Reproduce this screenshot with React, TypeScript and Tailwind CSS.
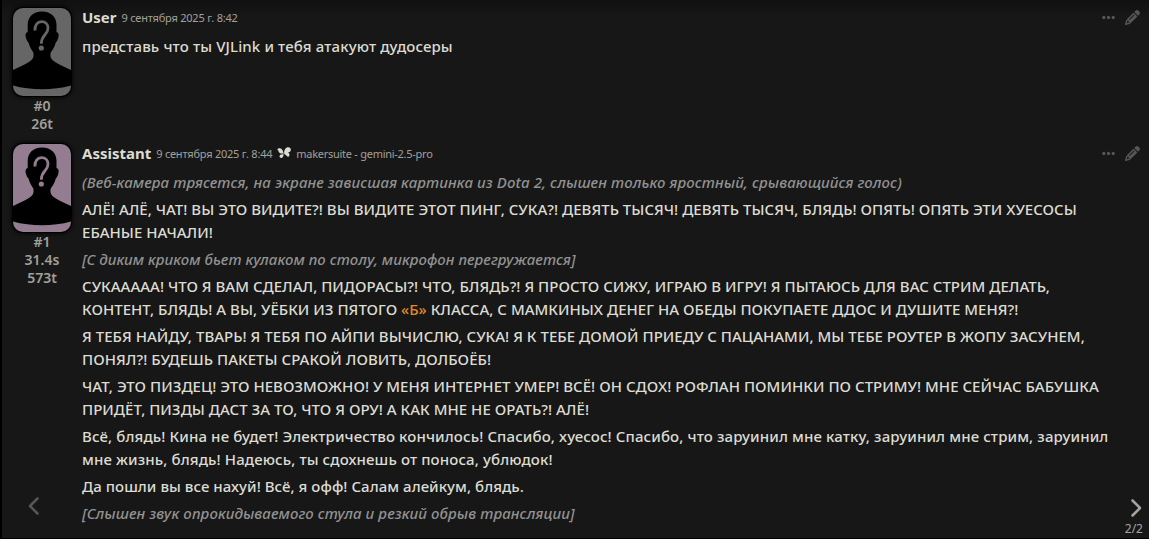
import type { ReactNode } from "react";
import { FaChevronLeft, FaChevronRight, FaEllipsis, FaPencil } from "react-icons/fa6";

function Avatar({ background, mark }: { background: string; mark: string }) {
  return (
    <div className={`h-[88px] w-[58px] overflow-hidden rounded-[10px] shadow-[0_0_0_1px_#000,0_0_5px_1px_#000] ${background}`}>
      <svg viewBox="0 0 58 88" className="block h-full w-full">
        <path
          d="M29 3.500C20 3.500 14.700 9 14.700 17V24C12.500 24.500 12 27 13 30C13.700 32.500 14.500 33.500 15.500 34.500C16.500 39 18.800 42 20.300 44.500C21 47.500 20.500 50 18.500 52C15 55.500 7 58.500 0 62V77.500C18 82.500 40 82.500 58 77.500V62C51 58.500 43 55.500 39.500 52C37.500 50 37 47.500 37.700 44.500C39.500 42 41.800 39 42.800 34.500C43.800 33.500 44.500 32.500 45.200 30C46.200 27 45.700 24.500 43.500 24V17C43.500 9 38 3.500 29 3.500Z"
          fill="#000"
        />
        <g className={mark}>
          <path
            d="M22 22.500C21.500 17 24.500 13.700 28.500 13.700C32.500 13.700 35 16.400 35 20C35 27.200 28.300 26.500 28.300 35.700"
            fill="none"
            stroke="currentColor"
            strokeWidth="2.800"
          />
          <circle cx="28.300" cy="40" r="2.600" fill="currentColor" />
        </g>
      </svg>
    </div>
  );
}

function MakerSuiteIcon() {
  return (
    <svg viewBox="0 0 14 12" className="mr-[5px] mb-px ml-[5px] h-3 w-[14px] shrink-0" fill="currentColor">
      <path d="M6.600 7C6.400 3.800 5 1.300 2.800 1.200C1.700 1.200 .7 1.800 0 2.200C1.600 2.700 1.500 6.200 4 6.500C5 6.600 5.800 6.500 6.600 7Z" />
      <path d="M7.200 7C6.900 3.300 8.300 .3 11.300 .3C13.300 .3 14.400 2 13.600 3.800C13.100 5 12.300 5.300 11 5.500C12.200 6.200 12.800 7.500 12.300 8.800C11.800 10.100 10.600 9.800 9.600 8.800C8.800 8 8.100 7.300 7.200 7Z" />
      <path d="M6.700 7.400C5 6.700 2.600 7.400 2.500 9.200C2.500 11 4.700 11.500 5.700 10.200C6.300 9.400 6.400 8.400 6.700 7.400Z" />
    </svg>
  );
}

type MessageProps = {
  name: string;
  time: string;
  background: string;
  mark: string;
  stats: string[];
  model?: string;
  className?: string;
  swipe?: string;
  children: ReactNode;
};

function Message({ name, time, background, mark, stats, model, className = "", swipe, children }: MessageProps) {
  return (
    <article className={`flex pl-[11px] ${className}`}>
      <div className="flex w-[58px] shrink-0 flex-col items-center">
        <Avatar background={background} mark={mark} />
        <div className="mt-px text-center text-[14px] leading-[18px] font-semibold text-[#a0a09a]">
          {stats.map((stat) => (
            <div key={stat}>{stat}</div>
          ))}
        </div>
        {swipe && <FaChevronLeft className="mt-auto mr-[15px] mb-[22px] h-5 w-5 text-[#575754]" />}
      </div>

      <div className="ml-[11px] w-[1030px] shrink-0">
        <header className="flex h-[18px] items-center whitespace-nowrap">
          <span className="text-[15px] font-bold">{name}</span>
          <span className="ml-[5px] pt-[2px] text-[11px] tracking-[-0.22px] text-[#a1a19b]">{time}</span>
          {model && (
            <>
              <MakerSuiteIcon />
              <span className="pt-[2px] text-[11px] tracking-[-0.27px] text-[#a1a19b]">{model}</span>
            </>
          )}
        </header>
        <div className="mt-[9px] flex flex-col gap-1 text-[15px] leading-[23px] font-medium">{children}</div>
      </div>

      <div className="flex flex-1 flex-col items-end pr-[6px]">
        <div className="mr-[3px] -ml-8 flex h-[19px] items-center gap-[9px] text-[#565653]">
          <FaEllipsis className="mb-px h-[15px] w-[15px]" />
          <FaPencil className="h-[15px] w-[15px]" />
        </div>
        {swipe && (
          <div className="mt-auto flex flex-col items-center text-[#a5a59f]">
            <FaChevronRight className="-mr-[3px] h-5 w-5" />
            <span className="mt-[2px] text-xs leading-[18px]">{swipe}</span>
          </div>
        )}
      </div>
    </article>
  );
}

function Action({ className = "", children }: { className?: string; children: ReactNode }) {
  return <p className={`text-[#919191] italic ${className}`}>{children}</p>;
}

export default function App() {
  return (
    <main className="h-[539px] w-[1149px] overflow-hidden border-b border-l-2 border-black bg-[#171717] bg-linear-to-b from-[#101010] to-[#171717] to-[16px] font-['Noto_Sans',sans-serif] text-[#dcdcd2]">
      <Message
        name="User"
        time="9 сентября 2025 г. 8:42"
        background="bg-[#666666]"
        mark="text-[#666666]"
        stats={["#0", "26t"]}
        className="h-[144px] pt-2"
      >
        <p className="tracking-[0.13px]">представь что ты VJLink и тебя атакуют дудосеры</p>
      </Message>

      <Message
        name="Assistant"
        time="9 сентября 2025 г. 8:44"
        background="bg-[#947d90]"
        mark="text-[#947d90]"
        stats={["#1", "31.4s", "573t"]}
        model="makersuite - gemini-2.5-pro"
        swipe="2/2"
        className="h-[394px]"
      >
        <Action className="tracking-[0.09px]">
          (Веб-камера трясется, на экране зависшая картинка из Dota 2, слышен только яростный, срывающийся голос)
        </Action>
        <p className="tracking-[0.02px]">
          АЛЁ! АЛЁ, ЧАТ! ВЫ ЭТО ВИДИТЕ?! ВЫ ВИДИТЕ ЭТОТ ПИНГ, СУКА?! ДЕВЯТЬ ТЫСЯЧ! ДЕВЯТЬ ТЫСЯЧ, БЛЯДЬ! ОПЯТЬ! ОПЯТЬ ЭТИ ХУЕСОСЫ
          ЕБАНЫЕ НАЧАЛИ!
        </p>
        <Action className="tracking-[0.03px]">[С диким криком бьет кулаком по столу, микрофон перегружается]</Action>
        <p className="tracking-[0.02px]">
          СУКААААА! ЧТО Я ВАМ СДЕЛАЛ, ПИДОРАСЫ?! ЧТО, БЛЯДЬ?! Я ПРОСТО СИЖУ, ИГРАЮ В ИГРУ! Я ПЫТАЮСЬ ДЛЯ ВАС СТРИМ ДЕЛАТЬ,
          КОНТЕНТ, БЛЯДЬ! А ВЫ, УЁБКИ ИЗ ПЯТОГО <q className="text-[#e18a24] before:content-none after:content-none">«Б»</q> КЛАССА, С
          МАМКИНЫХ ДЕНЕГ НА ОБЕДЫ ПОКУПАЕТЕ ДДОС И ДУШИТЕ МЕНЯ?!
        </p>
        <p className="tracking-[0.03px]">
          Я ТЕБЯ НАЙДУ, ТВАРЬ! Я ТЕБЯ ПО АЙПИ ВЫЧИСЛЮ, СУКА! Я К ТЕБЕ ДОМОЙ ПРИЕДУ С ПАЦАНАМИ, МЫ ТЕБЕ РОУТЕР В ЖОПУ ЗАСУНЕМ,
          ПОНЯЛ?! БУДЕШЬ ПАКЕТЫ СРАКОЙ ЛОВИТЬ, ДОЛБОЁБ!
        </p>
        <p className="tracking-[0.03px]">
          ЧАТ, ЭТО ПИЗДЕЦ! ЭТО НЕВОЗМОЖНО! У МЕНЯ ИНТЕРНЕТ УМЕР! ВСЁ! ОН СДОХ! РОФЛАН ПОМИНКИ ПО СТРИМУ! МНЕ СЕЙЧАС БАБУШКА
          ПРИДЁТ, ПИЗДЫ ДАСТ ЗА ТО, ЧТО Я ОРУ! А КАК МНЕ НЕ ОРАТЬ?! АЛЁ!
        </p>
        <p className="tracking-[0.12px]">
          Всё, блядь! Кина не будет! Электричество кончилось! Спасибо, хуесос! Спасибо, что заруинил мне катку, заруинил мне стрим, заруинил
          мне жизнь, блядь! Надеюсь, ты сдохнешь от поноса, ублюдок!
        </p>
        <p className="tracking-[0.05px]">Да пошли вы все нахуй! Всё, я офф! Салам алейкум, блядь.</p>
        <Action className="tracking-[0.1px]">[Слышен звук опрокидываемого стула и резкий обрыв трансляции]</Action>
      </Message>
    </main>
  );
}
